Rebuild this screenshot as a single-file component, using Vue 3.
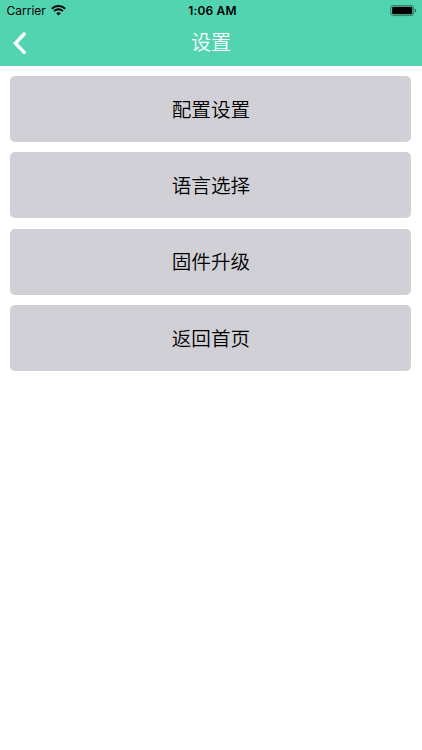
<script setup>
const items = ['配置设置', '语言选择', '固件升级', '返回首页']
</script>

<template>
  <main class="screen">
    <header class="header">
      <div class="status">
        <div class="carrier">
          <span>Carrier</span>
          <svg class="wifi" width="15" height="11" viewBox="0 0 15 11">
            <path d="M.8 3.7A9.8 9.8 0 0 1 14.2 3.7M3.1 6.1A6.3 6.3 0 0 1 11.9 6.1" fill="none" stroke="#000" stroke-width="1.9" />
            <path d="M5.2 8.2Q7.5 6.3 9.8 8.2L7.5 10.6Z" />
          </svg>
        </div>
        <span class="time">1:06 AM</span>
        <svg class="battery" width="27" height="12" viewBox="0 0 27 12">
          <rect x=".7" y=".4" width="23.1" height="10.2" rx="2.6" fill="none" stroke="#000" stroke-opacity=".42" />
          <rect x="2.1" y="1.8" width="20.2" height="7.4" rx="1.2" />
          <path d="M24.9 3.8Q26.3 4.2 26.3 5.5T24.9 7.2Z" fill-opacity=".5" />
        </svg>
      </div>
      <nav class="nav">
        <svg class="back" width="14" height="22" viewBox="0 0 14 22">
          <path d="M11.2 2L2.4 11.3L11.2 20.4" fill="none" stroke="#fff" stroke-width="3.4" stroke-linecap="round" />
        </svg>
        <h1>设置</h1>
        <span></span>
      </nav>
    </header>
    <section class="list">
      <button v-for="item in items" :key="item" class="item"><span class="label">{{ item }}</span></button>
    </section>
  </main>
</template>

<style>
body { margin: 0; background: #fff; }
</style>
<style scoped>
.screen { min-height: 750px; font-family: Inter, "Noto Sans CJK SC", sans-serif; color: #000; }
.header { height: 66px; background: #53d4b1; }
.status { height: 22px; display: grid; grid-template-columns: 1fr auto 1fr; align-items: center; padding: 0 5px 0 6.5px; box-sizing: border-box; font-size: 12px; line-height: 15px; }
.status span { padding-bottom: 1px; }
.carrier { display: flex; align-items: center; gap: 5px; }
.wifi { margin-top: -1px; }
.time { font-weight: 600; letter-spacing: .15px; padding-left: 1.5px; }
.battery { justify-self: end; }
.nav { height: 42px; display: grid; grid-template-columns: 1fr auto 1fr; align-items: center; padding: 0 13px; }
h1 { margin: 0; font-size: 20px; line-height: 40px; font-weight: 350; color: #fff; }
.list { display: flex; flex-direction: column; gap: 10.4px; padding: 10px 10.6px 10px 10.4px; }
.item { height: 66px; border: 0; border-radius: 5px; background: #d1d0d6; font: inherit; font-size: 19.6px; font-weight: 350; color: #000; padding: 0; }
.label { display: block; padding-bottom: 2px; }
</style>
